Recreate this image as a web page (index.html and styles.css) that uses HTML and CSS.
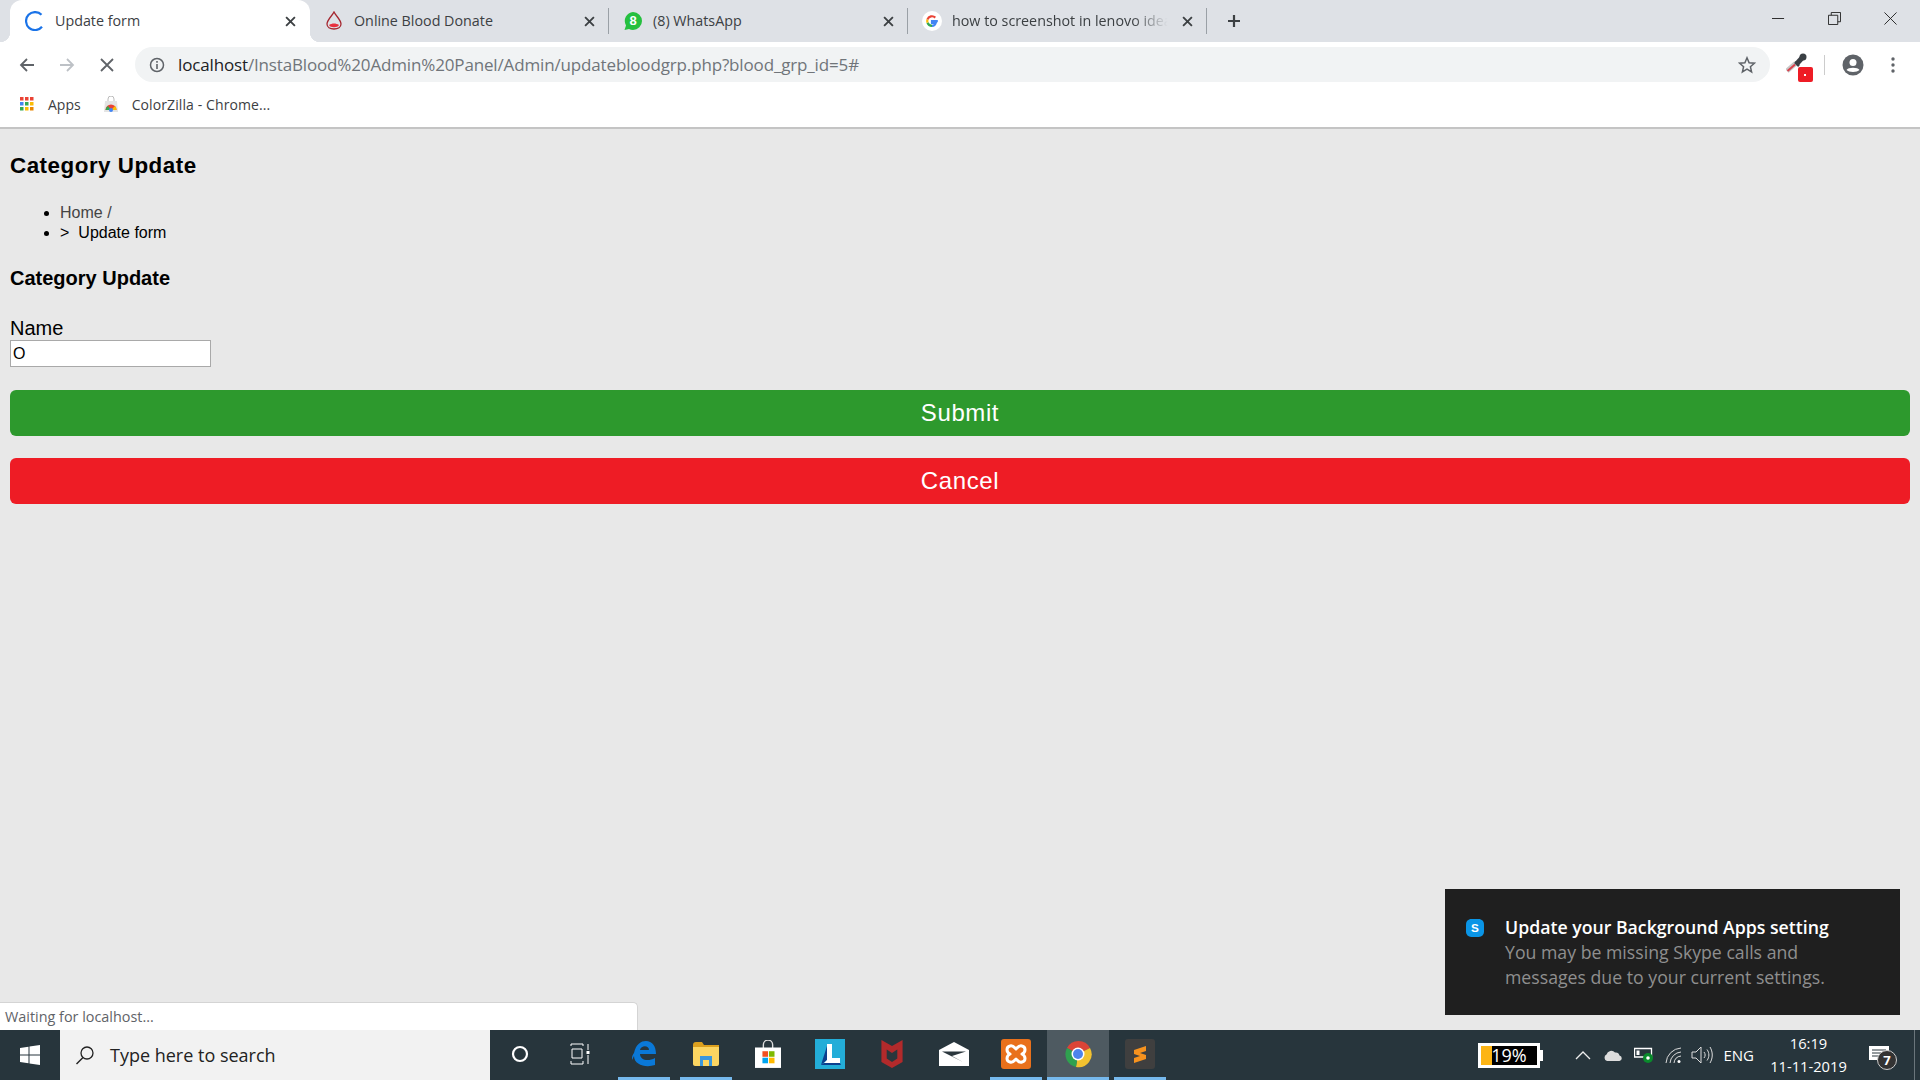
FILE: index.html
```html
<!DOCTYPE html>
<html lang="en">

<head>
    <meta charset="UTF-8">
    <title>Update form</title>
    <link rel="stylesheet" href="styles.css">
</head>

<body>
    <div class="tabstrip">
        <div class="tab active">
            <svg class="fav" viewBox="0 0 20 20"><path d="M16.500 3.800A9 9 0 1 0 17 15.800" fill="none" stroke="#1a73e8" stroke-width="2.200"/></svg>
            <span class="tab-title">Update form</span>
            <svg class="tab-x" viewBox="0 0 10 10"><path d="M1 1L9 9M9 1L1 9" stroke="#3c4043" stroke-width="1.7"/></svg>
        </div>
        <div class="tab">
            <svg class="fav" viewBox="0 0 20 20"><path d="M10 1C8 5 3 9 3 13C3 16 6 18 10 18C14 18 17 16 17 13C17 9 12 5 10 1Z" fill="none" stroke="#a5262f" stroke-width="1.3"/><path d="M5 14C8 12 12 12 15 14C14 17 6 17 5 14Z" fill="#e8303f"/></svg>
            <span class="tab-title">Online Blood Donate</span>
            <svg class="tab-x" viewBox="0 0 10 10"><path d="M1 1L9 9M9 1L1 9" stroke="#3c4043" stroke-width="1.7"/></svg>
        </div>
        <div class="sep"></div>
        <div class="tab">
            <svg class="fav" viewBox="0 0 20 20"><path d="M10 1A9 9 0 0 1 10 19A9 9 0 0 1 6 18L1.500 19L3 14.500A9 9 0 0 1 10 1Z" fill="#25c03f"/><text x="10" y="14" class="wa-count">8</text></svg>
            <span class="tab-title">(8) WhatsApp</span>
            <svg class="tab-x" viewBox="0 0 10 10"><path d="M1 1L9 9M9 1L1 9" stroke="#3c4043" stroke-width="1.7"/></svg>
        </div>
        <div class="sep"></div>
        <div class="tab">
            <svg class="fav" viewBox="0 0 20 20">
                <circle cx="10" cy="10" r="10" fill="#fff"/>
                <path d="M15.800 10.200H10V12H13.700C13.200 13.800 11.800 14.800 10 14.800" fill="none" stroke="#4285f4" stroke-width="2.200"/>
                <path d="M10 14.800A4.800 4.800 0 0 1 5.500 11.600" fill="none" stroke="#34a853" stroke-width="2.200"/>
                <path d="M5.500 11.600A4.800 4.800 0 0 1 5.500 8.400" fill="none" stroke="#fbbc05" stroke-width="2.200"/>
                <path d="M5.500 8.400A4.800 4.800 0 0 1 13.300 6.600" fill="none" stroke="#ea4335" stroke-width="2.200"/>
            </svg>
            <span class="tab-title fade">how to screenshot in lenovo idea</span>
            <svg class="tab-x" viewBox="0 0 10 10"><path d="M1 1L9 9M9 1L1 9" stroke="#3c4043" stroke-width="1.7"/></svg>
        </div>
        <div class="sep"></div>
        <svg class="new-tab" viewBox="0 0 14 14"><path d="M7 1V13M1 7H13" stroke="#3c4043" stroke-width="2.200"/></svg>
        <div class="win-btns">
            <svg viewBox="0 0 14 14"><path d="M0 7H13" stroke="#222" stroke-width="1"/></svg>
            <svg viewBox="0 0 14 14"><path d="M.5 3.500H10.500V13.500H.5ZM3.500 3.500V.5H13.500V10.500H10.500" fill="none" stroke="#222"/></svg>
            <svg viewBox="0 0 14 14"><path d="M.5 .5L13.500 13.500M13.500 .5L.5 13.500" stroke="#222"/></svg>
        </div>
    </div>

    <div class="toolbar">
        <svg class="nav" viewBox="0 0 16 16"><path d="M15 8H2M8 2L2 8L8 14" fill="none" stroke="#5f6368" stroke-width="1.800"/></svg>
        <svg class="nav" viewBox="0 0 16 16"><path d="M1 8H14M8 2L14 8L8 14" fill="none" stroke="#bdc1c6" stroke-width="1.800"/></svg>
        <svg class="nav" viewBox="0 0 16 16"><path d="M2 2L14 14M14 2L2 14" stroke="#5f6368" stroke-width="1.800"/></svg>
        <div class="omnibox">
            <svg class="info" viewBox="0 0 16 16"><circle cx="8" cy="8" r="6.500" fill="none" stroke="#5f6368" stroke-width="1.500"/><path d="M8 7V12M8 4V5.800" stroke="#5f6368" stroke-width="1.600"/></svg>
            <span class="url"><b>localhost</b>/InstaBlood%20Admin%20Panel/Admin/updatebloodgrp.php?blood_grp_id=5#</span>
            <svg class="star" viewBox="0 0 18 18"><path d="M9 1.800L11.100 6.700L16.400 7.200L12.400 10.700L13.600 15.900L9 13.200L4.400 15.900L5.600 10.700L1.600 7.200L6.900 6.700Z" fill="none" stroke="#5f6368" stroke-width="1.500"/></svg>
        </div>
        <div class="ext">
            <svg viewBox="0 0 30 30">
                <path d="M1 18L10 10" stroke="#c8c8c8" stroke-width="5"/>
                <path d="M1.500 18L9 11.500" stroke="#d8404c" stroke-width="2"/>
                <path d="M9 9L13 13" stroke="#3a3f44" stroke-width="2.500"/>
                <path d="M11 10.500L16 5" stroke="#3a3f44" stroke-width="5"/>
                <circle cx="17" cy="4" r="3.500" fill="#3a3f44"/>
                <rect x="12" y="14" width="15" height="15" rx="2" fill="#ee1c25"/>
                <rect x="18" y="21" width="2" height="2" fill="#fff"/>
            </svg>
        </div>
        <div class="tool-sep"></div>
        <svg class="avatar" viewBox="0 0 22 22"><circle cx="11" cy="11" r="10.500" fill="#5f6368"/><circle cx="11" cy="8.500" r="3.500" fill="#fff"/><path d="M4.500 16C6 13 16 13 17.500 16C15 18.500 7 18.500 4.500 16Z" fill="#fff"/></svg>
        <svg class="menu" viewBox="0 0 4 18"><circle cx="2" cy="3" r="1.700" fill="#5f6368"/><circle cx="2" cy="9" r="1.700" fill="#5f6368"/><circle cx="2" cy="15" r="1.700" fill="#5f6368"/></svg>
    </div>

    <div class="bookmarks">
        <svg class="apps" viewBox="0 0 14 14">
            <rect width="3.500" height="3.500" fill="#ea4335"/><rect x="5" width="3.500" height="3.500" fill="#ea4335"/><rect x="10" width="3.500" height="3.500" fill="#ea4335"/>
            <rect y="5" width="3.500" height="3.500" fill="#4285f4"/><rect x="5" y="5" width="3.500" height="3.500" fill="#34a853"/><rect x="10" y="5" width="3.500" height="3.500" fill="#fbbc05"/>
            <rect y="10" width="3.500" height="3.500" fill="#34a853"/><rect x="5" y="10" width="3.500" height="3.500" fill="#fbbc05"/><rect x="10" y="10" width="3.500" height="3.500" fill="#ea8600"/>
        </svg>
        <span class="bm-label">Apps</span>
        <svg class="store" viewBox="0 0 14 16">
            <path d="M1 5H13L14 16H0Z" fill="#e4e4e4"/><path d="M4 5V3A3 3 0 0 1 10 3V5" fill="none" stroke="#bbb"/>
            <path d="M1.500 14A5.500 5.500 0 0 1 12.500 14Z" fill="#ea4335"/><path d="M7 14H12.500A5.500 5.500 0 0 0 11 10Z" fill="#fbbc05"/><path d="M1.500 14H7L4 10A5.500 5.500 0 0 0 1.500 14Z" fill="#34a853"/><circle cx="7" cy="14" r="2" fill="#4285f4"/>
        </svg>
        <span class="bm-label">ColorZilla - Chrome...</span>
    </div>

    <main class="page">
        <h2 class="page-title">Category Update</h2>
        <ul class="crumbs">
            <li><a href="#">Home /</a></li>
            <li><span class="gt">&gt;</span>Update form</li>
        </ul>
        <h3 class="form-title">Category Update</h3>
        <form class="form">
            <label for="name">Name</label>
            <input type="text" id="name" value="O">
            <button type="button" class="btn btn-submit">Submit</button>
            <button type="button" class="btn btn-cancel">Cancel</button>
        </form>

        <div class="status">Waiting for localhost...</div>

        <div class="toast">
            <svg class="skype" viewBox="0 0 20 20"><path d="M6 0H14C17.500 0 20 2.500 20 6V14C20 17.500 17.500 20 14 20H6C2.500 20 0 17.500 0 14V6C0 2.500 2.500 0 6 0Z" fill="#0a95e6"/><text x="10" y="14.500" class="skype-s">S</text></svg>
            <div>
                <div class="toast-title">Update your Background Apps setting</div>
                <div class="toast-text">You may be missing Skype calls and<br>messages due to your current settings.</div>
            </div>
        </div>
    </main>

    <footer class="taskbar">
        <div class="start">
            <svg viewBox="0 0 20 20"><path d="M0 3L8.500 1.800V9.500H0ZM9.500 1.600L20 0V9.500H9.500ZM0 10.500H8.500V18.200L0 17ZM9.500 10.500H20V20L9.500 18.400Z" fill="#fff"/></svg>
        </div>
        <div class="search">
            <svg viewBox="0 0 20 20"><circle cx="12" cy="8" r="6" fill="none" stroke="#222" stroke-width="1.300"/><path d="M8 12.500L1.500 19" stroke="#222" stroke-width="1.500"/></svg>
            <span>Type here to search</span>
        </div>
        <div class="task-item">
            <svg class="ic-18" viewBox="0 0 18 18"><circle cx="9" cy="9" r="7" fill="none" stroke="#fff" stroke-width="2.200"/></svg>
        </div>
        <div class="task-item">
            <svg class="ic-22" viewBox="0 0 22 22"><path d="M2 1H14M2 21H14M3 6H13V15H3ZM2 18V21M14 18V21M2 1V3M14 1V3M19 1V7M19 12V21" fill="none" stroke="#fff" stroke-width="1"/><rect x="17.500" y="8" width="3" height="3" fill="#fff"/></svg>
        </div>
        <div class="task-item open">
            <svg class="ic-26" viewBox="0 0 26 28"><path d="M3 13C5 4 10 1 15 1C21 1 25 6 25 14H9C9 20 17 22 24 18V25C15 28 3 25 3 16C1 20 1 21 1 18C1 16 2 14 3 13ZM9 10H18C18 5 10 5 9 10Z" fill="#0a78d7"/></svg>
        </div>
        <div class="task-item open">
            <svg class="ic-26" viewBox="0 0 26 24"><path d="M0 3C0 1 1 0 3 0H9L11 3H26V6H0Z" fill="#dca01e"/><path d="M0 5H26V22C26 23 25 24 24 24H2C1 24 0 23 0 22Z" fill="#fcd561"/><path d="M7 14H19V24H16V18H10V24H7Z" fill="#3a96dc"/></svg>
        </div>
        <div class="task-item">
            <svg class="ic-26" viewBox="0 0 28 30"><path d="M9 9V5A5 5 0 0 1 19 5V9" fill="none" stroke="#ddd" stroke-width="1.500"/><rect y="8" width="28" height="22" fill="#fff"/><rect x="8" y="12" width="6" height="6" fill="#f25022"/><rect x="15" y="12" width="6" height="6" fill="#7fba00"/><rect x="8" y="19" width="6" height="6" fill="#00a4ef"/><rect x="15" y="19" width="6" height="6" fill="#ffb900"/></svg>
        </div>
        <div class="task-item">
            <svg class="ic-30" viewBox="0 0 30 30"><rect width="30" height="30" fill="#23add8"/><path d="M6 26L12 7V21Z" fill="#0c3f8e"/><path d="M12 5H17V19H25V24H9L12 21Z" fill="#fff"/><path d="M6 26L9 24H25L26 26Z" fill="#0c3f8e"/></svg>
        </div>
        <div class="task-item">
            <svg class="ic-30" viewBox="0 0 30 34"><path d="M3 1L15 8L27 1V26L15 33L3 26Z" fill="#b22a2b"/><path d="M9 12L15 16L21 12V22L15 26L9 22Z" fill="#2a363c"/></svg>
        </div>
        <div class="task-item">
            <svg class="ic-30" viewBox="0 0 30 24"><path d="M0 8L15 0L30 8V24H0Z" fill="#fff"/><path d="M3 9.500H27L13 14L24 20Z" fill="#2a363c"/></svg>
        </div>
        <div class="task-item open">
            <svg class="ic-30" viewBox="0 0 30 30"><rect width="30" height="30" rx="3" fill="#e9711c"/><path d="M9 7C12 6 13 8 15 10C17 8 18 6 21 7C25 8 25 13 21 15C25 17 25 22 21 23C18 24 17 22 15 20C13 22 12 24 9 23C5 22 5 17 9 15C5 13 5 8 9 7Z" fill="none" stroke="#fff" stroke-width="3" stroke-linejoin="round"/></svg>
        </div>
        <div class="task-item open current">
            <svg class="ic-28" viewBox="0 0 28 28">
                <path d="M14 14L3 8A13 13 0 0 1 26 8Z" fill="#db4437"/>
                <path d="M14 14L26 8A13 13 0 0 1 12 27Z" fill="#f2c230"/>
                <path d="M14 14L12 27A13 13 0 0 1 3 8Z" fill="#2fa14f"/>
                <circle cx="14" cy="14" r="6.500" fill="#fff"/><circle cx="14" cy="14" r="5" fill="#4d84ec"/>
            </svg>
        </div>
        <div class="task-item open">
            <svg class="ic-30" viewBox="0 0 30 30"><rect width="30" height="30" rx="3" fill="#3f3f3f"/><path d="M9 11L21 7V12L15 14L21 16V20L9 24V19L15 17L9 15Z" fill="#f7921e"/></svg>
        </div>

        <div class="tray">
            <div class="battery"><span class="batt-fill"></span><span class="batt-text">19%</span></div>
            <svg class="tray-ic chev" viewBox="0 0 16 10"><path d="M1 9L8 2L15 9" fill="none" stroke="#eee" stroke-width="1.300"/></svg>
            <svg class="tray-ic cloud" viewBox="0 0 20 12"><path d="M4 12A3.500 3.500 0 0 1 3.500 5.500A5 5 0 0 1 12 3.500A4 4 0 0 1 16.500 6.500A2.800 2.800 0 0 1 16.500 12Z" fill="#ddd"/></svg>
            <svg class="tray-ic plug" viewBox="0 0 20 16"><path d="M.5 1.500H17.500V10H.5Z" fill="none" stroke="#fff" stroke-width="1.300"/><rect x="2.500" y="3.500" width="3" height="4.500" fill="#fff"/><circle cx="14" cy="11" r="5" fill="#0a8a2c"/><circle cx="14" cy="11" r="1.800" fill="#fff"/></svg>
            <svg class="tray-ic wifi" viewBox="0 0 20 18"><path d="M1 17A16 16 0 0 1 16 2M5 17A12 12 0 0 1 16 6M9 17A8 8 0 0 1 16 10" fill="none" stroke="#ddd" stroke-width="1"/><circle cx="14" cy="15.500" r="1.500" fill="#fff"/></svg>
            <svg class="tray-ic sound" viewBox="0 0 22 18"><path d="M1 6H5L10 1V17L5 12H1Z" fill="none" stroke="#ddd"/><path d="M13 6C14.500 8 14.500 10 13 12M16 3.500C18.500 7 18.500 11 16 14.500M19 1C22 6 22 12 19 17" fill="none" stroke="#ddd"/></svg>
            <span class="lang">ENG</span>
            <div class="clock"><span>16:19</span><span>11-11-2019</span></div>
            <div class="notif">
                <svg viewBox="0 0 20 18"><path d="M0 0H20V14H0Z" fill="#fff"/><path d="M3 4H17M3 7H17M3 10H13" stroke="#2a363c"/></svg>
                <span class="notif-count">7</span>
            </div>
            <div class="show-desktop"></div>
        </div>
    </footer>
</body>

</html>
```

FILE: styles.css
```css
* {
    margin: 0;
    padding: 0;
    box-sizing: border-box;
}

body {
    height: 100vh;
    display: flex;
    flex-direction: column;
    overflow: hidden;
    font-family: "Liberation Sans", Arial, sans-serif;
    background: #e8e8e8;
}

svg {
    display: block;
    flex-shrink: 0;
}

/* tab strip */
.tabstrip {
    height: 42px;
    display: flex;
    align-items: center;
    padding-left: 10px;
    background: #dee1e6;
    font-family: "Open Sans", sans-serif;
    font-size: 14.300px;
    color: #3c4043;
}

.tab {
    width: 298px;
    height: 42px;
    display: flex;
    align-items: center;
    padding: 0 13px 0 14px;
    flex-shrink: 0;
}

.tab.active {
    position: relative;
    width: 300px;
    padding: 0 14px 0 15px;
    background: #fff;
    border-radius: 12px 12px 0 0;
}

.tab.active::before,
.tab.active::after {
    content: "";
    position: absolute;
    bottom: 0;
    width: 10px;
    height: 10px;
}

.tab.active::before {
    left: -10px;
    background: radial-gradient(circle at 0 0, transparent 10px, #fff 10.500px);
}

.tab.active::after {
    right: -10px;
    background: radial-gradient(circle at 100% 0, transparent 10px, #fff 10.500px);
}

.fav {
    width: 20px;
    height: 20px;
}

.tab-title {
    flex: 1;
    margin: 0 0 2px 10px;
    white-space: nowrap;
    overflow: hidden;
}

.tab-title.fade {
    -webkit-mask-image: linear-gradient(to right, #000 82%, transparent 98%);
    mask-image: linear-gradient(to right, #000 82%, transparent 98%);
}

.tab-x {
    width: 11px;
    height: 11px;
    margin-left: 10px;
}

.sep {
    width: 1px;
    height: 26px;
    background: #9aa0a6;
    flex-shrink: 0;
}

.wa-count {
    font-family: "Liberation Sans", sans-serif;
    font-size: 13px;
    font-weight: bold;
    fill: #fff;
    text-anchor: middle;
}

.new-tab {
    width: 14px;
    height: 14px;
    margin-left: 20px;
}

.win-btns {
    margin-left: auto;
    display: flex;
    align-items: center;
    gap: 43px;
    padding: 0 23px 6px 0;
}

.win-btns svg {
    width: 13px;
    height: 13px;
}

/* address bar */
.toolbar {
    height: 45px;
    display: flex;
    align-items: center;
    padding-left: 19px;
    background: #fff;
}

.nav {
    width: 16px;
    height: 16px;
    margin-right: 24px;
}

.nav:nth-child(3) {
    margin-right: 20px;
}

.omnibox {
    flex: 1;
    height: 35px;
    display: flex;
    align-items: center;
    padding: 0 14px 0 14px;
    background: #f1f3f4;
    border-radius: 18px;
    font-family: "Open Sans", sans-serif;
    font-size: 17px;
    color: #70757a;
}

.info {
    width: 16px;
    height: 16px;
    margin-right: 13px;
}

.url {
    flex: 1;
    white-space: nowrap;
    letter-spacing: -0.15px;
}

.url b {
    font-weight: normal;
    color: #202124;
}

.star {
    width: 18px;
    height: 18px;
}

.ext {
    margin-left: 16px;
    margin-top: 7px;
    width: 30px;
}

.ext svg {
    width: 30px;
    height: 30px;
}

.tool-sep {
    width: 1px;
    height: 20px;
    margin-left: 8px;
    background: #ccc;
}

.avatar {
    width: 22px;
    height: 22px;
    margin-left: 17px;
}

.menu {
    width: 4px;
    height: 18px;
    margin: 0 25px 0 27px;
}

/* bookmarks */
.bookmarks {
    height: 42px;
    display: flex;
    align-items: center;
    padding: 0 0 6px 20px;
    background: #fff;
    border-bottom: 2px solid #c4c4c4;
    font-family: "Open Sans", sans-serif;
    font-size: 14px;
    color: #3c4043;
}

.apps {
    width: 14px;
    height: 14px;
}

.store {
    width: 14px;
    height: 16px;
    margin-left: 23px;
}

.bm-label {
    margin-left: 14px;
}

.store + .bm-label {
    margin-left: 14px;
    letter-spacing: 0.1px;
}

/* page */
.page {
    position: relative;
    flex: 1;
    padding: 24px 10px 0;
    color: #000;
}

.page-title {
    font-size: 22.400px;
    line-height: 26px;
    letter-spacing: 0.5px;
}

.crumbs {
    margin-top: 24px;
    padding-left: 50px;
    font-size: 16px;
    line-height: 19.500px;
}

.crumbs a {
    color: #444;
    text-decoration: none;
}

.gt {
    margin-right: 9px;
}

.form-title {
    margin-top: 24px;
    font-size: 20px;
    line-height: 24px;
}

.form {
    margin-top: 27px;
}

.form label {
    display: block;
    font-size: 20px;
    line-height: 23px;
}

.form input {
    display: block;
    width: 201px;
    height: 27px;
    padding: 0 2px;
    background: #fff;
    border: 1px solid #a9a9a9;
    font-family: "Liberation Sans", sans-serif;
    font-size: 16px;
}

.btn {
    display: block;
    width: 100%;
    height: 46px;
    border: 0;
    border-radius: 6px;
    color: #fff;
    font-family: "Liberation Sans", sans-serif;
    font-size: 24px;
    letter-spacing: 0.6px;
}

.btn-submit {
    margin-top: 23px;
    background: #2d992d;
}

.btn-cancel {
    margin-top: 22px;
    background: #ee1c25;
}

.status {
    position: absolute;
    left: 0;
    bottom: 0;
    width: 638px;
    height: 28px;
    padding: 4px 0 0 5px;
    background: #fff;
    border: 1px solid #d4d4d4;
    border-width: 1px 1px 0 0;
    border-radius: 0 5px 0 0;
    font-family: "Open Sans", sans-serif;
    font-size: 14.400px;
    color: #5f6368;
}

.toast {
    position: absolute;
    right: 20px;
    bottom: 15px;
    width: 455px;
    height: 126px;
    display: flex;
    padding: 26px 0 0 21px;
    background: #1f1f1f;
    font-family: "Open Sans", sans-serif;
    font-size: 17.700px;
    line-height: 25px;
}

.skype {
    width: 18px;
    height: 18px;
    margin: 4px 21px 0 0;
}

.skype-s {
    font-family: "Liberation Sans", sans-serif;
    font-size: 13px;
    font-weight: bold;
    fill: #fff;
    text-anchor: middle;
}

.toast-title {
    color: #fff;
    font-weight: 600;
}

.toast-text {
    color: #8f8f8f;
}

/* taskbar */
.taskbar {
    height: 50px;
    display: flex;
    background: #27353c;
    color: #fff;
    font-family: "Open Sans", sans-serif;
}

.start {
    width: 60px;
    display: flex;
    align-items: center;
    justify-content: center;
}

.start svg {
    width: 20px;
    height: 20px;
}

.search {
    width: 430px;
    margin-right: -1px;
    display: flex;
    align-items: center;
    padding-left: 15px;
    background: #f2f2f2;
    color: #222;
    font-size: 18px;
}

.search svg {
    width: 20px;
    height: 20px;
    margin-right: 15px;
}

.task-item {
    position: relative;
    width: 62px;
    display: flex;
    align-items: center;
    justify-content: center;
    padding-bottom: 3px;
}

.task-item.open::after {
    content: "";
    position: absolute;
    left: 5px;
    right: 5px;
    bottom: 0;
    height: 3px;
    background: #76b9ed;
}

.task-item.current {
    background: #4e5a61;
}

.task-item.current::after {
    left: 0;
    right: 0;
}

.ic-18 {
    width: 18px;
    height: 18px;
}

.ic-22 {
    width: 22px;
    height: 22px;
    margin-right: 4px;
}

.ic-26 {
    width: 26px;
    height: 28px;
}

.ic-28 {
    width: 28px;
    height: 28px;
}

.ic-30 {
    width: 30px;
    height: 30px;
}

.tray {
    margin-left: auto;
    display: flex;
    align-items: center;
}

.battery {
    position: relative;
    width: 62px;
    height: 25px;
    background: #000;
    border: 3px solid #fff;
    font-size: 18px;
    line-height: 19px;
    text-align: center;
}

.battery::after {
    content: "";
    position: absolute;
    right: -6px;
    top: 4px;
    width: 3px;
    height: 11px;
    background: #fff;
}

.batt-fill {
    position: absolute;
    left: 0;
    top: 0;
    width: 11px;
    height: 19px;
    background: #fdb515;
}

.batt-text {
    position: relative;
}

.tray-ic {
    height: 16px;
}

.chev {
    width: 16px;
    height: 10px;
    margin-left: 35px;
}

.cloud {
    width: 20px;
    height: 12px;
    margin-left: 12px;
}

.plug {
    width: 20px;
    margin-left: 11px;
}

.wifi {
    width: 20px;
    height: 18px;
    margin-left: 11px;
}

.sound {
    width: 22px;
    height: 18px;
    margin-left: 6px;
}

.lang {
    margin-left: 10.500px;
    font-size: 15px;
}

.clock {
    width: 95px;
    margin-left: 7px;
    display: flex;
    flex-direction: column;
    align-items: center;
    gap: 4px;
    font-size: 14.700px;
    line-height: 19px;
}

.notif {
    position: relative;
    width: 20px;
    height: 18px;
    margin: 0 25px 0 13px;
}

.notif-count {
    position: absolute;
    left: 8px;
    top: 4px;
    width: 20px;
    height: 20px;
    border: 1px solid #ccc;
    border-radius: 50%;
    background: #333;
    font-size: 13px;
    font-weight: bold;
    line-height: 18px;
    text-align: center;
}

.show-desktop {
    width: 1px;
    height: 100%;
    margin-right: 5px;
    background: #6a757b;
}
```
